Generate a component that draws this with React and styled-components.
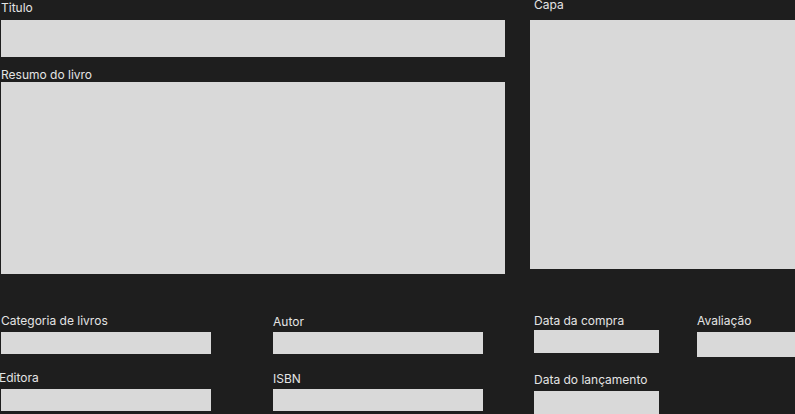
import React from "react";
import styled, { createGlobalStyle } from "styled-components";

const Global = createGlobalStyle`
  html, body { margin: 0; padding: 0; background: #1e1e1e; overflow: hidden; }
  body { font-family: Inter, "Noto Sans", sans-serif; }
`;

const Page = styled.div`
  width: 795px;
  height: 414px;
  padding-left: 1px;
  box-sizing: border-box;
  overflow: hidden;
`;

const TopRow = styled.div`
  display: flex;
  align-items: flex-start;
  gap: 25px;
`;

const Column = styled.div`
  display: flex;
  flex-direction: column;
  gap: ${(p) => p.$gap || 0}px;
  width: ${(p) => (p.$width ? `${p.$width}px` : "auto")};
  padding-top: ${(p) => p.$pt || 0}px;
`;

const Field = styled.div`
  display: flex;
  flex-direction: column;
  gap: ${(p) => p.$gap || 0}px;
`;

const Label = styled.label`
  display: block;
  font-size: 12px;
  line-height: 15px;
  color: #e4e4e4;
  white-space: nowrap;
  margin-top: ${(p) => p.$mt || 0}px;
  margin-left: ${(p) => p.$ml || 0}px;
`;

const Box = styled.div`
  background: #d9d9d9;
  width: ${(p) => p.$w}px;
  height: ${(p) => p.$h}px;
`;

const BottomGrid = styled.div`
  margin-top: 39px;
  display: grid;
  grid-template-columns: 272px 261px 163px 1fr;
  align-items: start;
`;

export default function App() {
  return (
    <>
      <Global />
      <Page>
        <TopRow>
          <Column $gap={10} $width={504}>
            <Field $gap={5}>
              <Label>Titulo</Label>
              <Box $w={504} $h={37} />
            </Field>
            <Field>
              <Label>Resumo do livro</Label>
              <Box $w={504} $h={192} />
            </Field>
          </Column>
          <Column $width={265}>
            <Field $gap={8}>
              <Label $mt={-3} $ml={4}>Capa</Label>
              <Box $w={265} $h={249} />
            </Field>
          </Column>
        </TopRow>
        <BottomGrid>
          <Column $gap={16}>
            <Field $gap={4}>
              <Label>Categoria de livros</Label>
              <Box $w={210} $h={22} />
            </Field>
            <Field $gap={4}>
              <Label $ml={-2}>Editora</Label>
              <Box $w={210} $h={22} />
            </Field>
          </Column>
          <Column $gap={17} $pt={1}>
            <Field $gap={3}>
              <Label>Autor</Label>
              <Box $w={210} $h={22} />
            </Field>
            <Field $gap={3}>
              <Label>ISBN</Label>
              <Box $w={210} $h={22} />
            </Field>
          </Column>
          <Column $gap={19}>
            <Field $gap={2}>
              <Label>Data da compra</Label>
              <Box $w={125} $h={23} />
            </Field>
            <Field $gap={4}>
              <Label>Data do lançamento</Label>
              <Box $w={125} $h={23} />
            </Field>
          </Column>
          <Column>
            <Field $gap={4}>
              <Label>Avaliação</Label>
              <Box $w={98} $h={25} />
            </Field>
          </Column>
        </BottomGrid>
      </Page>
    </>
  );
}
